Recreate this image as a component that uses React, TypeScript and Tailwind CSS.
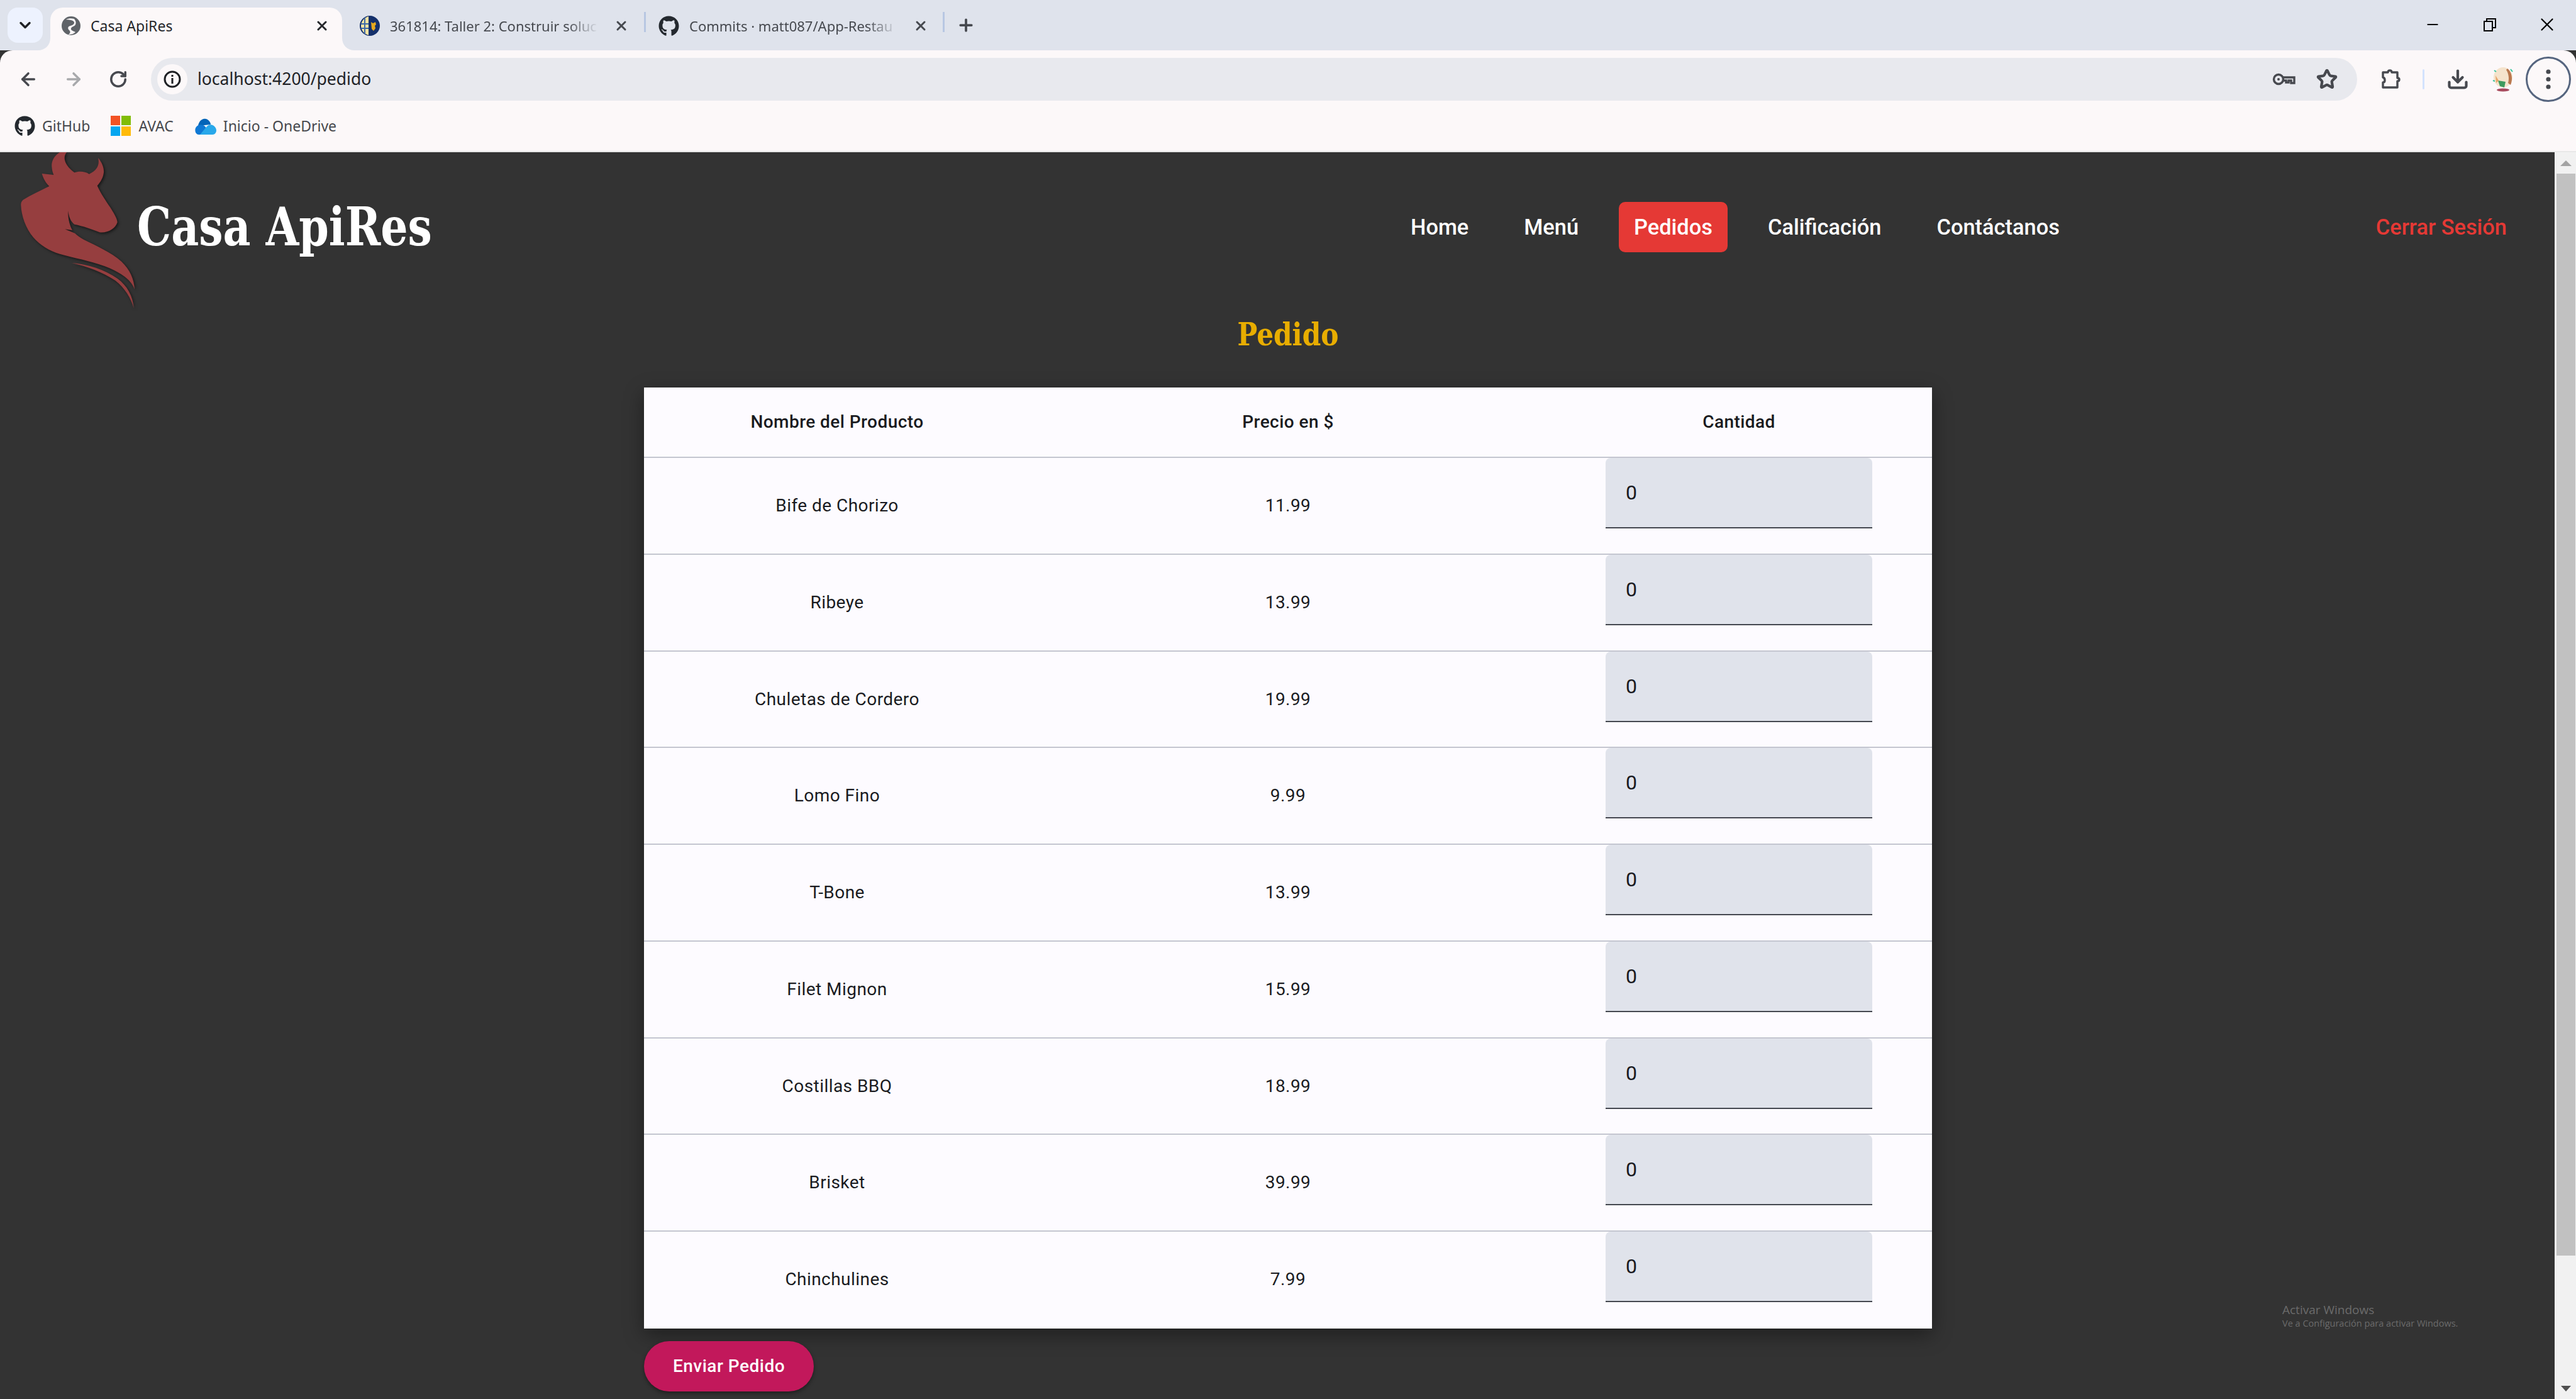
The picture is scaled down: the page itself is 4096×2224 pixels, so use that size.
import React from 'react'
import { FaGithub } from 'react-icons/fa'
import { ArrowLeft, ArrowRight, RotateCw, Star, Download, ChevronDown, X, Plus, Minus } from 'lucide-react'

const products = [
  { name: 'Bife de Chorizo', price: '11.99' },
  { name: 'Ribeye', price: '13.99' },
  { name: 'Chuletas de Cordero', price: '19.99' },
  { name: 'Lomo Fino', price: '9.99' },
  { name: 'T-Bone', price: '13.99' },
  { name: 'Filet Mignon', price: '15.99' },
  { name: 'Costillas BBQ', price: '18.99' },
  { name: 'Brisket', price: '39.99' },
  { name: 'Chinchulines', price: '7.99' },
]

function GlobeFavicon() {
  return (
    <svg width="32" height="32" viewBox="0 0 32 32" className="shrink-0">
      <circle cx="16" cy="16" r="15" fill="#5f6368" />
      <path d="M8 6c4 1 9 0 12 3s-1 6-5 7-5 4-2 7 1 5-1 7c4 0 8-1 11-4-4-2-8-3-7-6s6-3 7-6 1-5-2-9c-4-1-9-1-13 1z" fill="#fcf8f9" />
    </svg>
  )
}

function UniFavicon() {
  return (
    <svg width="32" height="32" viewBox="0 0 32 32" className="shrink-0">
      <circle cx="16" cy="16" r="16" fill="#14306b" />
      <path d="M14 1C7 3 2 9 2 16s5 13 12 15z" fill="#f3e3a3" />
      <path d="M2 13h12M2 20h12M8 3v26" stroke="#3d6aa8" strokeWidth="2" fill="none" />
      <path d="M18 10l3 2 4-2 1 4-2 2 1 4-3 4-3-3z" fill="#e6a91e" />
    </svg>
  )
}

function TabDivider() {
  return <div className="mb-[10px] h-[32px] w-[3px] shrink-0 self-center bg-[#b8c7e2]" />
}

function TabStrip() {
  const fadeTitle = "ml-[16px] w-[332px] whitespace-nowrap font-['Noto_Sans',sans-serif] text-[22px] [mask-image:linear-gradient(to_right,black_85%,transparent)]"
  return (
    <div className="flex h-[80px] items-end bg-[#dfe3ec] pl-[12px] text-black">
      <div className="mb-[12px] mr-[12px] flex h-[56px] w-[56px] items-center justify-center rounded-[16px] bg-[#edf2fe]">
        <ChevronDown size={28} strokeWidth={3} color="#1f2125" />
      </div>
      <div className="relative flex h-[68px] w-[464px] shrink-0 items-center rounded-t-[20px] bg-[#fcf8f9] pb-[10px] text-[#26282c]">
        <svg width="20" height="20" viewBox="0 0 20 20" className="absolute bottom-0 left-[-20px]">
          <path d="M20 0v20H0C12 20 20 12 20 0z" fill="#fcf8f9" />
        </svg>
        <svg width="20" height="20" viewBox="0 0 20 20" className="absolute bottom-0 right-[-20px]">
          <path d="M0 0v20h20C8 20 0 12 0 0z" fill="#fcf8f9" />
        </svg>
        <div className="ml-[17px]"><GlobeFavicon /></div>
        <span className="ml-[15px] flex-1 whitespace-nowrap font-['Noto_Sans',sans-serif] text-[23px]">Casa ApiRes</span>
        <X size={24} strokeWidth={3} className="mx-[20px] shrink-0" />
      </div>
      <div className="flex h-[68px] w-[480px] shrink-0 items-center pl-[28px] pb-[10px] text-[#46494f]">
        <UniFavicon />
        <span className={fadeTitle}>361814: Taller 2: Construir soluc</span>
        <X size={24} strokeWidth={3} className="ml-[24px] shrink-0" />
      </div>
      <TabDivider />
      <div className="flex h-[68px] w-[472px] shrink-0 items-center pl-[20px] pb-[10px] text-[#46494f]">
        <FaGithub size={33} color="#24292f" className="shrink-0" />
        <span className={fadeTitle}>Commits · matt087/App-Restau</span>
        <X size={24} strokeWidth={3} className="ml-[24px] shrink-0" />
      </div>
      <TabDivider />
      <Plus size={30} strokeWidth={3} color="#46494f" className="mb-[25px] ml-[19px]" />
      <div className="mb-[24px] ml-auto flex items-center">
        <div className="flex w-[91px] justify-center"><Minus size={26} strokeWidth={2} /></div>
        <div className="flex w-[91px] justify-center">
          <svg width="22" height="22" viewBox="0 0 22 22" fill="none" stroke="black" strokeWidth="2">
            <path d="M2 6h13v15H2z" />
            <path d="M6 6V2h14v14h-5" />
          </svg>
        </div>
        <div className="flex w-[92px] justify-center"><X size={34} strokeWidth={1.6} /></div>
      </div>
    </div>
  )
}

function Toolbar() {
  return (
    <div className="flex h-[92px] items-center rounded-t-[20px] bg-[#fcf8f9] pt-[12px] pb-[12px] pl-[9px] pr-[8px] text-[#47494f]">
      <div className="flex w-[72px] justify-center"><ArrowLeft size={32} strokeWidth={2.6} /></div>
      <div className="flex w-[71px] justify-center"><ArrowRight size={32} strokeWidth={2.6} color="#a8a9ac" /></div>
      <div className="flex w-[72px] justify-center"><RotateCw size={30} strokeWidth={2.8} /></div>
      <div className="ml-[16px] flex h-[68px] flex-1 items-center rounded-full bg-[#e8e9ee]">
        <div className="ml-[10px] flex h-[48px] w-[48px] items-center justify-center rounded-full bg-[#fcf8f9]">
          <svg width="28" height="28" viewBox="0 0 28 28" fill="none" stroke="#1f2125" strokeWidth="3">
            <circle cx="14" cy="14" r="12" />
            <path d="M14 12v9M14 7v3" />
          </svg>
        </div>
        <span className="ml-[16px] font-['Noto_Sans',sans-serif] text-[26.5px] text-[#202226]">localhost:4200/pedido</span>
        <div className="ml-auto flex w-[65px] justify-center">
          <svg width="37" height="20" viewBox="0 0 37 20" fill="none" stroke="#47494f" strokeWidth="3.4">
            <circle cx="10" cy="10" r="7.5" />
            <path d="M17 7h18v9h-5v-4h-4v3h-4v-3h-5" />
            <circle cx="10" cy="10" r="2" fill="#47494f" stroke="none" />
          </svg>
        </div>
        <div className="mr-[12px] flex w-[72px] justify-center"><Star size={34} strokeWidth={3} /></div>
      </div>
      <div className="ml-[18px] flex w-[72px] justify-center">
        <svg width="32" height="32" viewBox="0 0 32 32" fill="none" stroke="#47494f" strokeWidth="3.4" strokeLinejoin="round">
          <path d="M3 5h8c0-4 6-4 6 0h9v9c4 0 4 5 0 5v10H3v-8c4 0 4-7 0-8z" />
        </svg>
      </div>
      <div className="ml-[14px] mr-[17px] h-[32px] w-[3px] rounded-full bg-[#d3e3fd]" />
      <div className="flex w-[72px] justify-center"><Download size={36} strokeWidth={2.8} /></div>
      <div className="flex w-[72px] justify-center">
        <svg width="36" height="40" viewBox="0 0 36 40">
          <ellipse cx="18" cy="17" rx="15" ry="16" fill="#f5e3cc" />
          <path d="M25 3c7 5 9 17 5 26l-4-3c2-7 1-15-3-21z" fill="#b9774e" />
          <path d="M10 22l12 2-2 9-7-2z" fill="#3f9a5e" />
          <path d="M6 14l5 8-4 4z" fill="#e8a46a" />
          <ellipse cx="18" cy="37" rx="10" ry="2.5" fill="#a84a5e" />
          <path d="M4 6l3 2M30 4l3 4M2 22l3 1" stroke="#35c49a" strokeWidth="2" />
        </svg>
      </div>
      <div className="flex h-[72px] w-[72px] items-center justify-center rounded-full border-[3px] border-[#56657f]">
        <svg width="8" height="32" viewBox="0 0 8 32" fill="#47494f">
          <circle cx="4" cy="4" r="3.6" />
          <circle cx="4" cy="16" r="3.6" />
          <circle cx="4" cy="28" r="3.6" />
        </svg>
      </div>
    </div>
  )
}

function BookmarksBar() {
  const label = "font-['Noto_Sans',sans-serif] text-[23px] text-[#46484d]"
  return (
    <div className="flex h-[68px] items-center bg-[#fcf8f9] pb-[12px] pl-[23px]">
      <FaGithub size={33} color="#24292f" />
      <span className={`ml-[11px] ${label}`}>GitHub</span>
      <svg width="32" height="32" viewBox="0 0 32 32" className="ml-[33px]">
        <rect width="15" height="15" fill="#f35325" />
        <rect x="17" width="15" height="15" fill="#81bc06" />
        <rect y="17" width="15" height="15" fill="#05a6f0" />
        <rect x="17" y="17" width="15" height="15" fill="#ffba08" />
      </svg>
      <span className={`ml-[12px] ${label}`}>AVAC</span>
      <svg width="34" height="28" viewBox="0 0 34 28" className="ml-[34px]">
        <path d="M5 14C6 6 13 0 20 4c3 2 5 5 5 8z" fill="#0364b8" />
        <path d="M2 26C-1 22 0 15 6 13c5-2 10 0 12 5l-6 10H6c-2 0-3-1-4-2z" fill="#0f78d4" />
        <path d="M8 28l10-12c3-4 8-5 12-2 4 3 5 8 3 11-1 2-3 3-5 3z" fill="#28a8ea" />
      </svg>
      <span className={`ml-[11px] ${label}`}>Inicio - OneDrive</span>
    </div>
  )
}

function BullLogo() {
  return (
    <svg width="210" height="254" viewBox="0 18 630 762" className="shrink-0 drop-shadow-[2px_2px_2px_rgba(0,0,0,0.55)]">
      <path
        fill="#963e3f"
        d="M225 18C198 35 184 62 187 88C188 102 191 115 196 126L140 120C146 142 158 165 175 180C130 202 88 222 50 245C42 252 39 262 40 272C42 320 62 380 100 425C130 460 175 488 225 503C290 522 370 535 440 562C500 585 565 620 582 672C580 625 560 578 520 540C470 495 400 465 340 435C322 425 308 415 298 405L250 385L285 390C272 365 264 335 265 298C268 325 278 350 295 362C335 370 380 385 415 400C450 405 490 385 500 352C498 330 480 305 465 280C445 250 420 215 404 178C420 160 432 140 435 115C437 90 425 65 408 45C416 75 405 105 365 122C345 108 315 108 295 115C268 95 248 70 248 45C248 35 252 25 258 18Z"
      />
      <path
        fill="#963e3f"
        d="M282 546C360 552 440 578 500 620C548 655 574 705 578 762C566 715 535 665 490 630C430 590 355 562 282 546Z"
      />
    </svg>
  )
}

function Header() {
  const item = 'rounded-[10px] px-6 py-[19px] text-[34.4px] leading-[42px] font-medium'
  return (
    <header className="flex h-[240px] items-start">
      <div className="flex w-[2219px] shrink-0 items-start pl-[20px]">
        <BullLogo />
        <span className="mt-[68px] ml-[-12px] origin-left scale-x-[0.89] whitespace-nowrap font-['DejaVu_Serif_Condensed','DejaVu_Serif',serif] text-[85px] leading-[100px] font-bold text-white">
          Casa ApiRes
        </span>
      </div>
      <nav className="mt-[79px] flex gap-[40px] text-white">
        <a className={item}>Home</a>
        <a className={item}>Menú</a>
        <a className={`${item} bg-[#e53935]`}>Pedidos</a>
        <a className={item}>Calificación</a>
        <a className={item}>Contáctanos</a>
      </nav>
      <a className={`${item} mt-[79px] ml-auto mr-[52px] text-[#e53935]`}>Cerrar Sesión</a>
    </header>
  )
}

function PedidoTable() {
  return (
    <div className="w-[2048px] bg-[#fdfbff] text-[28px] tracking-[0.45px] text-[#1a1b1f] shadow-[0_10px_30px_rgba(0,0,0,0.4)]">
      <div className="grid h-[112px] grid-cols-[614px_820px_614px] items-center border-b-2 border-[#c4c6d0] text-center font-medium">
        <div>Nombre del Producto</div>
        <div>Precio en $</div>
        <div>Cantidad</div>
      </div>
      {products.map((p, i) => (
        <div key={p.name} className={`grid h-[153.78px] grid-cols-[614px_820px_614px] items-start text-center ${i < products.length - 1 ? 'border-b-2 border-[#c4c6d0]' : ''}`}>
          <div className="mt-[59px] leading-[34px]">{p.name}</div>
          <div className="mt-[59px] leading-[34px]">{p.price}</div>
          <div className="flex justify-center">
            <div className="h-[112px] w-[424px] rounded-t-[8px] border-b-2 border-[#44474f] bg-[#e0e3eb] pl-[32px] text-left text-[32px] leading-[110px] tracking-[0.5px]">
              0
            </div>
          </div>
        </div>
      ))}
    </div>
  )
}

function Scrollbar() {
  return (
    <div className="flex w-[34px] shrink-0 flex-col items-center bg-[#f1f1f1]">
      <div className="flex h-[34px] items-center justify-center pl-[2px]">
        <div className="h-0 w-0 border-x-[9px] border-b-[9px] border-x-transparent border-b-[#a3a3a3]" />
      </div>
      <div className="ml-[2px] h-[1720px] w-[30px] bg-[#c1c1c1]" />
      <div className="mt-auto flex h-[34px] items-center justify-center pl-[2px]">
        <div className="h-0 w-0 border-x-[8px] border-t-[9px] border-x-transparent border-t-[#505050]" />
      </div>
    </div>
  )
}

export default function App() {
  return (
    <div className="flex h-[2224px] w-[4096px] flex-col overflow-hidden bg-[#333333] font-['Roboto',sans-serif]">
      <TabStrip />
      <Toolbar />
      <BookmarksBar />
      <div className="h-[2px] bg-[#e8e8e8]" />
      <div className="flex min-h-0 flex-1">
        <main className="relative w-[4062px] shrink-0 overflow-hidden">
          <Header />
          <div className="ml-[1024px] w-[2048px]">
            <h2 className="mt-[20px] mb-[54px] scale-x-[0.94] text-center font-['DejaVu_Serif_Condensed','DejaVu_Serif',serif] text-[50px] leading-[60px] font-bold text-[#e8ad00]">
              Pedido
            </h2>
            <PedidoTable />
            <button className="mt-[20px] flex h-[80px] w-[270px] items-center justify-center rounded-full bg-[#c2185b] text-[28px] font-medium tracking-[0.5px] text-white shadow-[0_3px_6px_rgba(0,0,0,0.4)]">
              Enviar Pedido
            </button>
          </div>
          <div className="absolute left-[3629px] top-[1828px] font-['Open_Sans',sans-serif] text-[#6b6b6b]">
            <div className="text-[19px] leading-[24px]">Activar Windows</div>
            <div className="text-[14.5px] leading-[20px]">Ve a Configuración para activar Windows.</div>
          </div>
        </main>
        <Scrollbar />
      </div>
    </div>
  )
}
